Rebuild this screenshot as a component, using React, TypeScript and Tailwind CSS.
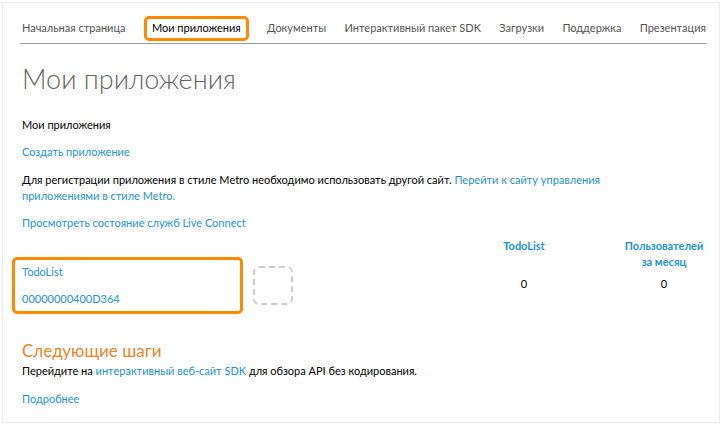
import React from "react";

const navItems = [
  "Начальная страница",
  "Мои приложения",
  "Документы",
  "Интерактивный пакет SDK",
  "Загрузки",
  "Поддержка",
  "Презентация",
];

const link = "text-[#1a94cc]";

export default function App() {
  return (
    <div
      className="w-[723px] h-[426px] bg-white pt-[2px] pl-[2px] pr-[3px] pb-[3px]"
      style={{ fontFamily: 'Lato, "Open Sans", sans-serif' }}
    >
      <div className="h-full border border-[#ebebeb] flex flex-col">
        {/* nav */}
        <div className="ml-[17px] mr-[12px] mt-[13px] border-b border-[#999] flex items-center justify-between h-[28px] pb-[2px]">
          {navItems.map((n, i) =>
            i === 1 ? (
              <div
                key={n}
                className="border-[3px] border-[#ff8a00] rounded-[5px] w-[105px] justify-center h-[25px] flex items-center text-[11px] text-black"
              >
                {n}
              </div>
            ) : (
              <div
                key={n}
                className={`text-[11px] text-[#555] ${i === 0 ? "ml-[2px]" : ""} ${i === 6 ? "mr-[1px]" : ""}`}
              >
                {n}
              </div>
            )
          )}
        </div>

        <div className="px-[19px]">
          <h1 className="text-[27px] font-light text-[#666] leading-[36px] mt-[17px]">
            Мои приложения
          </h1>
          <div className="text-[11px] leading-[16px] text-black mt-[20px]">Мои приложения</div>
          <div className={`text-[11px] leading-[16px] ${link} mt-[11px]`}>Создать приложение</div>
          <div className="text-[11px] text-black mt-[12px] leading-[16px] w-[580px]">
            Для регистрации приложения в стиле Metro необходимо использовать другой сайт.{" "}
            <span className={link}>
              Перейти к сайту управления приложениями в стиле Metro.
            </span>
          </div>
          <div className={`text-[11px] leading-[16px] ${link} mt-[11px]`}>
            Просмотреть состояние служб Live Connect
          </div>
        </div>

        {/* table */}
        <div className="flex mt-[7px] text-[11px] leading-[16px]">
          <div className="w-[471px] flex items-start">
            <div className="ml-[9px] w-[231px] h-[57px] border-[3px] border-[#ff8a00] rounded-[5px] mt-[19px] pl-[7px] flex flex-col justify-center gap-[11px]">
              <div className={link}>TodoList</div>
              <div className={link}>00000000400D364</div>
            </div>
            <div className="ml-[10px] mt-[28px] w-[40px] h-[39px] border-2 border-dashed border-[#ccc] rounded-[6px]" />
          </div>
          <div className="w-[100px] flex flex-col items-center">
            <div className={`font-bold ${link}`}>TodoList</div>
            <div className="mt-[22px] text-black">0</div>
          </div>
          <div className="ml-[40px] w-[100px] flex flex-col items-center">
            <div className={`font-bold ${link} text-center`}>
              Пользователей
              <br />
              за месяц
            </div>
            <div className="mt-[6px] text-black">0</div>
          </div>
        </div>

        <div className="px-[19px] mt-[27px]">
          <div className="text-[17px] text-[#e8862a] leading-[20px]">Следующие шаги</div>
          <div className="text-[11px] leading-[16px] text-black mt-[2px]">
            Перейдите на <span className={link}>интерактивный веб-сайт SDK</span> для обзора API без кодирования.
          </div>
          <div className={`text-[11px] leading-[16px] ${link} mt-[12px]`}>Подробнее</div>
        </div>
      </div>
    </div>
  );
}
